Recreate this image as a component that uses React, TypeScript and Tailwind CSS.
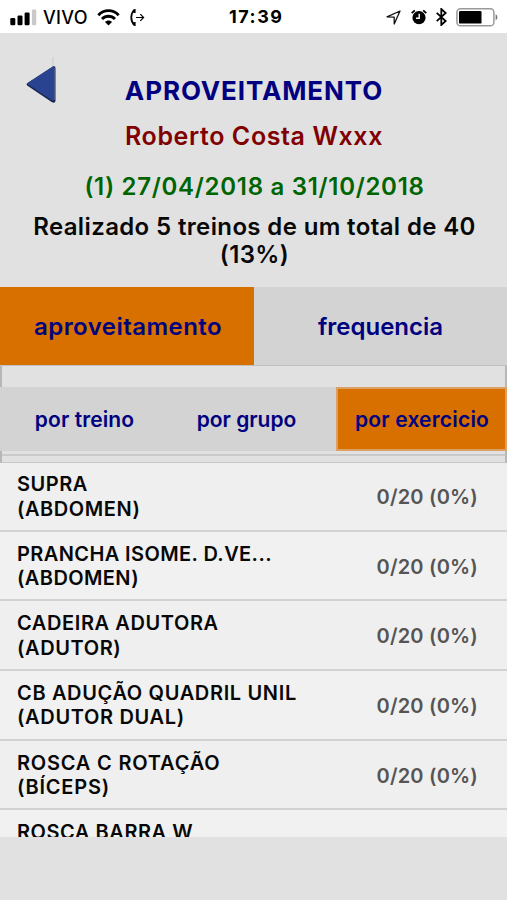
import clsx from 'clsx';

const exercises = [
    { name: 'SUPRA', group: '(ABDOMEN)', result: '0/20 (0%)', spacing: 'tracking-[0.55px]' },
    { name: 'PRANCHA ISOME. D.VE...', group: '(ABDOMEN)', result: '0/20 (0%)', spacing: 'tracking-[0.4px]' },
    { name: 'CADEIRA ADUTORA', group: '(ADUTOR)', result: '0/20 (0%)', spacing: 'tracking-[0.6px]' },
    { name: 'CB ADUÇÃO QUADRIL UNIL', group: '(ADUTOR DUAL)', result: '0/20 (0%)', spacing: 'tracking-[0.65px]' },
    { name: 'ROSCA C ROTAÇÃO', group: '(BÍCEPS)', result: '0/20 (0%)', spacing: 'tracking-[0.8px]' },
    { name: 'ROSCA BARRA W', group: '', result: '', spacing: 'tracking-[0.55px]' },
];

function StatusBar() {
    return (
        <div className="relative flex h-[33px] items-center justify-between bg-white pt-px pr-[9px] pl-[10px] text-black">
            <div className="flex items-center">
                <svg width="27" height="17" viewBox="0 0 27 17">
                    <rect x="0.3" y="9" width="5" height="7.2" rx="1.3" />
                    <rect x="7.5" y="6.5" width="5" height="9.7" rx="1.3" />
                    <rect x="14.6" y="3.5" width="5" height="12.7" rx="1.3" />
                    <rect x="21.9" y="0.5" width="4.4" height="15.7" rx="1.3" fill="#c9c9c9" />
                </svg>
                <span className="ml-[6px] pt-px text-[18px] leading-none font-medium tracking-[0.3px]">VIVO</span>
                <svg className="ml-[9px]" width="23" height="17" viewBox="0 0 23 17" fill="none" stroke="#000" strokeWidth="2.8">
                    <path d="M1.3 6.2C7 .1 16 .1 21.7 6.2" />
                    <path d="M5 10.1c3.7-3.8 9.3-3.8 13 0" />
                    <path d="M8 13c2-2 5-2 7 0l-3.5 3.6z" fill="#000" stroke="none" />
                </svg>
                <svg className="ml-[10px]" width="15" height="17" viewBox="0 0 15 17" fill="none" stroke="#000">
                    <path d="M4.5.8C.2 4.8.2 12.2 4.5 16.2" strokeWidth="1.8" />
                    <path d="M3.2 2.5 4.7 1v3M3.2 14.5 4.7 16v-3" strokeWidth="1.8" />
                    <path d="M6 8.5h7.5M10.3 5.2l3.3 3.3-3.3 3.3" strokeWidth="1.2" />
                </svg>
            </div>
            <span className="absolute left-[229px] text-[18px] leading-none font-bold tracking-[1.5px]">17:39</span>
            <div className="flex items-center">
                <svg width="15" height="15" viewBox="0 0 15 15" fill="none" stroke="#111" strokeWidth="1.3" strokeLinejoin="round">
                    <path d="M14 1 8.2 14V7.2L1 6.9z" />
                </svg>
                <svg className="ml-[10px]" width="16" height="16" viewBox="0 0 16 16" fill="none">
                    <circle cx="8" cy="8.7" r="6.6" fill="#000" />
                    <path d="M8.2 4.7v4.5H5" stroke="#fff" strokeWidth="1.4" />
                    <path d="M.7 4.2 3.8 1.3M15.3 4.2l-3.1-2.9" stroke="#000" strokeWidth="1.8" />
                </svg>
                <svg className="ml-[9px]" width="11" height="18" viewBox="0 0 11 18" fill="none" stroke="#000" strokeWidth="1.8">
                    <path d="m.7 4.8 9 8.2-4.4 4V1l4.4 4-9 8.2" />
                </svg>
                <svg className="ml-[9px]" width="42" height="19" viewBox="0 0 42 19">
                    <rect x="0.9" y="0.8" width="37" height="17" rx="3.6" fill="#fff" stroke="#999" strokeWidth="1.5" />
                    <rect x="3" y="3" width="22.5" height="12.6" rx="1.2" />
                    <path d="M39.6 6.3c2.4 1 2.4 5 0 6z" fill="#777" />
                </svg>
            </div>
        </div>
    );
}

function Header() {
    return (
        <header className="relative h-[254px] pt-[41px] text-center text-[24px] leading-[28px] font-semibold">
            <svg className="absolute top-[24px] left-[25px]" width="32" height="48" viewBox="0 0 32 48">
                <path d="M27.8 0v10" stroke="#cfd1d6" strokeWidth="1.5" />
                <path d="M28 9.5 2.5 26q-1.9 1.4 0 2.8L27 45.3q3.5 1.5 3.5-1.8V11.5q0-3.2-2.5-2z" fill="#17264f" />
                <path d="M27.8 9.5 3 25.8q-1.2.9.2 1.7L27.5 43.8q1.5.3 1.5-1.2V11q0-2.5-1.2-1.5z" fill="#2a4390" />
                <path d="M30 11v32" stroke="#7284b4" strokeWidth="1" />
            </svg>
            <h1 className="pl-px text-[26px] leading-[34px] font-bold tracking-[0.9px] text-[#000080]">APROVEITAMENTO</h1>
            <h2 className="mt-[14px] pl-px text-[25px] tracking-[0.6px] text-[#800000]">Roberto Costa Wxxx</h2>
            <p className="mt-[23px] pl-[2px] tracking-[0.7px] text-[#006400]">(1) 27/04/2018 a 31/10/2018</p>
            <p className="mt-[12px] pl-[2px] tracking-[0.37px] text-[#080808]">
                Realizado 5 treinos de um total de 40
                <br />
                (13%)
            </p>
        </header>
    );
}

export default function App() {
    return (
        <div className="h-[900px] w-[507px] overflow-hidden bg-[#e1e1e1] font-['Inter',sans-serif]">
            <StatusBar />
            <Header />
            <nav className="flex h-[79px] border-b border-[#c0c0c0] bg-[#d2d3d2] text-[24px] text-[#000080]">
                <button className="w-[254px] bg-[#d87000] pt-px pl-[2px] font-semibold tracking-[0.45px]">aproveitamento</button>
                <button className="flex-1 pt-px font-semibold">frequencia</button>
            </nav>
            <section>
                <div className="h-[21px] border-x-2 border-x-[#b7b7b7]" />
                <nav className="flex h-[64px] bg-[#d2d3d2] text-[21px] text-[#000080]">
                    <button className="w-[168px] pt-[2px] pl-px font-semibold tracking-[0.1px]">por treino</button>
                    <button className="w-[168px] pt-[2px] pr-[11px] font-semibold">por grupo</button>
                    <button className="flex-1 border-2 border-[#dda064] bg-[#d87000] pt-[2px] pl-px font-semibold tracking-[0.2px]">
                        por exercicio
                    </button>
                </nav>
                <div className="h-[12px] border-x-2 border-b border-x-[#b7b7b7] border-b-[#c8c8c8] pt-[3px]">
                    <div className="h-[2px] bg-[#cacaca]" />
                </div>
            </section>
            <ul className="h-[374px] overflow-hidden">
                {exercises.map((exercise, i) => (
                    <li
                        key={exercise.name}
                        className={clsx(
                            'flex h-[69.7px] items-start justify-between border-b-2 border-[#d2d2d0] pt-[10px] pr-[29px] pl-[17px] text-[20px] font-semibold first:h-[68.5px] first:pt-[9px]',
                            i % 2 ? 'bg-[#f1f1f1]' : 'bg-[#efefef]',
                        )}
                    >
                        <div className={clsx('leading-[24.5px] text-[#080808]', exercise.spacing)}>
                            <p>{exercise.name}</p>
                            {exercise.group && <p>{exercise.group}</p>}
                        </div>
                        <span className="pt-[10px] tracking-[0.2px] text-[#555]">{exercise.result}</span>
                    </li>
                ))}
            </ul>
        </div>
    );
}
